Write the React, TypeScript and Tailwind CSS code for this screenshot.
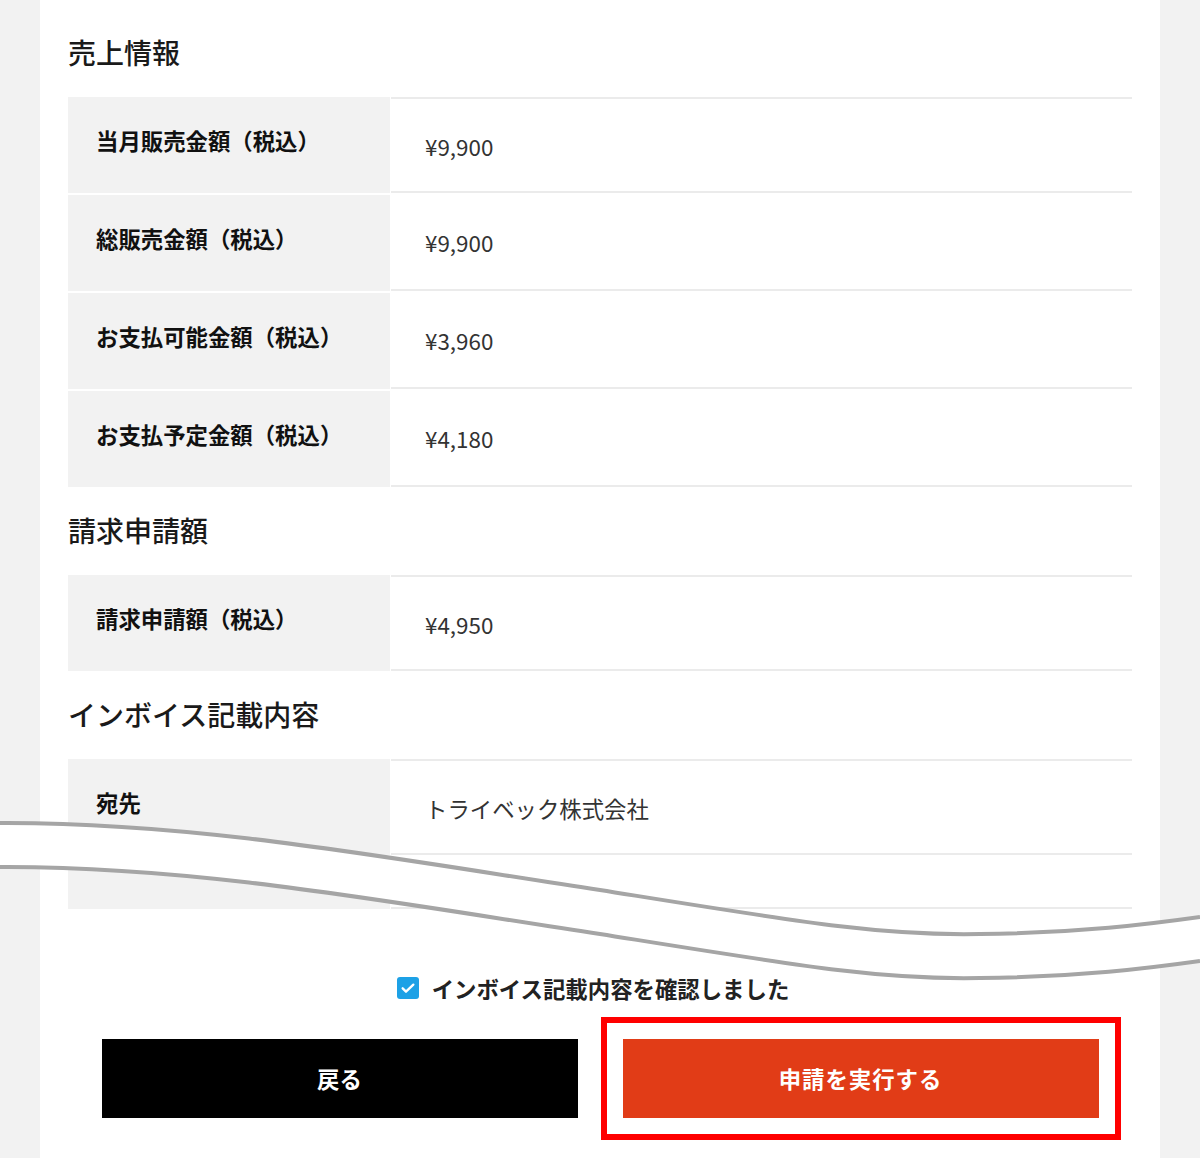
import React from "react";

type Row = { label: string; value: string };

const sales: Row[] = [
  { label: "当月販売金額（税込）", value: "¥9,900" },
  { label: "総販売金額（税込）", value: "¥9,900" },
  { label: "お支払可能金額（税込）", value: "¥3,960" },
  { label: "お支払予定金額（税込）", value: "¥4,180" },
];

function SectionTitle({ children, first }: { children: React.ReactNode; first?: boolean }) {
  return (
    <h2
      className={`${first ? "" : "mt-[23px]"} mb-[25px] text-[28px] leading-[40px] font-medium text-[#1a1a1a]`}
    >
      {children}
    </h2>
  );
}

function InfoRow({
  label,
  value,
  short,
  first,
}: {
  label: string;
  value?: string;
  short?: boolean;
  first?: boolean;
}) {
  return (
    <div className={`flex ${short ? "h-[52px]" : "h-[96px]"}`}>
      <div className="w-[322px] shrink-0 bg-[#f2f2f2] pl-[28px] pt-[26px] text-[22.4px] leading-[34px] font-bold text-[#111]">
        {label}
      </div>
      <div
        className={`flex-1 ml-[1px] ${first ? "border-t-2" : ""} border-b-2 border-[#ebebeb] pl-[34px] pt-[30px] text-[22.4px] leading-[34px] text-[#333]`}
      >
        {value}
      </div>
    </div>
  );
}

function Wave() {
  const top = "M0,23 C200,22 400,60 600,90 C800,122 880,136 980,134 C1080,133 1150,124 1200,117";
  const bottom = "M0,67 C200,66 400,104 600,134 C800,166 880,180 980,178 C1080,177 1150,168 1200,161";
  const band =
    top +
    " L1200,161 C1150,168 1080,177 980,178 C880,180 800,166 600,134 C400,104 200,66 0,67 Z";
  return (
    <svg
      className="absolute left-0 top-[800px] w-[1200px] h-[200px] pointer-events-none"
      viewBox="0 0 1200 200"
    >
      <path d={band} fill="#fff" />
      <path d={top} fill="none" stroke="#a5a5a5" strokeWidth="4" />
      <path d={bottom} fill="none" stroke="#a5a5a5" strokeWidth="4" />
    </svg>
  );
}

export default function App() {
  return (
    <div className="relative w-[1200px] min-h-[1158px] overflow-hidden bg-[#f2f2f2] font-['Noto_Sans_CJK_JP','Noto_Sans',sans-serif]">
      <div className="mx-[40px] bg-white px-[28px] pt-[32px] pb-[40px]">
        <SectionTitle first>売上情報</SectionTitle>
        <div className="flex flex-col gap-[2px]">
          {sales.map((r, i) => (
            <InfoRow key={r.label} label={r.label} value={r.value} first={i === 0} />
          ))}
        </div>

        <SectionTitle>請求申請額</SectionTitle>
        <InfoRow label="請求申請額（税込）" value="¥4,950" first />

        <SectionTitle>インボイス記載内容</SectionTitle>
        <div className="flex flex-col gap-[2px]">
          <InfoRow label="宛先" value="トライベック株式会社" first />
          <InfoRow label="" short />
        </div>

        {/* confirm checkbox */}
        <div className="mt-[62px] flex items-center justify-center pr-[14px]">
          <span className="flex h-[22px] w-[22px] items-center justify-center rounded-[3px] bg-[#1da1e6]">
            <svg viewBox="0 0 24 24" className="h-[16px] w-[16px]">
              <path d="M4 12.5l5 5L20 7" fill="none" stroke="#fff" strokeWidth="3.5" strokeLinecap="round" strokeLinejoin="round" />
            </svg>
          </span>
          <span className="ml-[13px] text-[22.4px] leading-[34px] font-bold text-[#222]">
            インボイス記載内容を確認しました
          </span>
        </div>

        <div className="mt-[34px] flex justify-center gap-[45px]">
          <button className="h-[79px] w-[476px] bg-black text-[22.4px] font-bold text-white">戻る</button>
          <div className="relative">
            <button className="h-[79px] w-[476px] bg-[#e13c17] text-[22.4px] font-bold text-white tracking-[1px]">
              申請を実行する
            </button>
            <div className="absolute -inset-[22px] border-[6px] border-[#ff0000] pointer-events-none" />
          </div>
        </div>
      </div>
      <Wave />
    </div>
  );
}
